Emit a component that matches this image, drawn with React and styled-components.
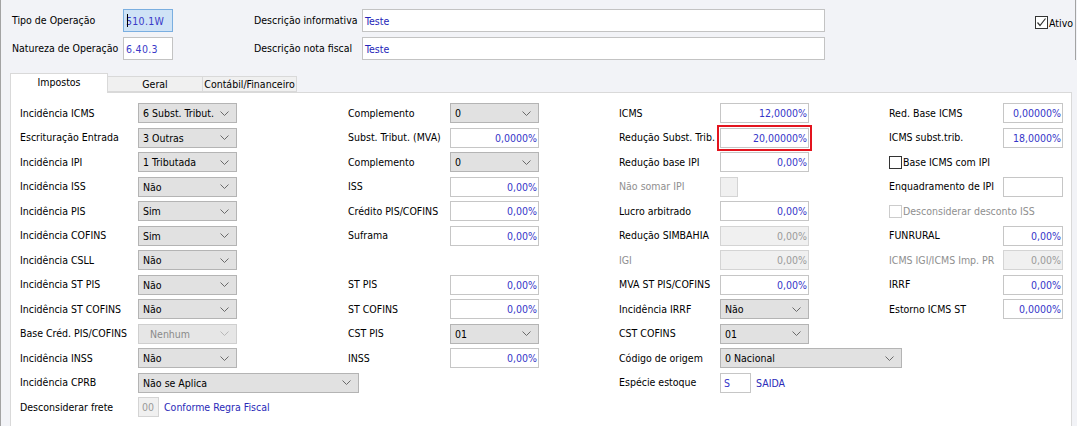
import React from "react";
import styled, { createGlobalStyle } from "styled-components";

const GlobalStyle = createGlobalStyle`
  html, body {
    margin: 0;
    padding: 0;
    overflow: hidden;
    background: #f2f3f7;
  }
  * {
    box-sizing: border-box;
  }
`;

const FONT = `"DejaVu Sans Condensed", "Liberation Sans", sans-serif`;
const VALUE = "#3535c8";

const Window = styled.div`
  width: 1077px;
  height: 426px;
  display: flex;
  flex-direction: column;
  background: #f2f3f7;
  border-left: 1px solid #a3a3a3;
  font-family: ${FONT};
  font-size: 10.5px;
  color: #000;
`;

const Header = styled.div`
  display: flex;
  align-items: flex-start;
  padding: 9px 2px 0 11px;
  margin-right: 1px;
  border-right: 1px solid #a3a3a3;
`;

const HeaderGrid = styled.div`
  display: grid;
  grid-template-columns: 111px 50px 81px 108px 463px;
  grid-auto-rows: 23px;
  row-gap: 5px;
  align-items: center;
  white-space: nowrap;
`;

const HeaderLabel = styled.span`
  margin-top: -2px;
`;

const HeaderInput = styled.div`
  height: 23px;
  display: flex;
  align-items: center;
  padding-left: 2px;
  border: 1px solid ${(p) => (p.$focus ? "#7aaee0" : "#c3c3c3")};
  background: ${(p) => (p.$focus ? "#cfe3f6" : "#fff")};
  color: ${(p) => (p.$mono ? "#3a3ac8" : "#2424b8")};
  letter-spacing: ${(p) => (p.$mono ? "0.3px" : "0")};
  position: relative;
`;

const Caret = styled.span`
  position: absolute;
  left: 3px;
  top: 4px;
  width: 1px;
  height: 13px;
  background: #000;
`;

const HeaderGap = styled.div``;

const Ativo = styled.label`
  margin-left: auto;
  margin-top: 7px;
  display: flex;
  align-items: center;
  gap: 1px;
`;

const Box = styled.span`
  width: 13px;
  height: 13px;
  display: inline-flex;
  align-items: center;
  justify-content: center;
  border: 1px solid ${(p) => (p.$disabled ? "#cccccc" : "#333")};
  background: #fff;
  flex-shrink: 0;
`;

const TabBar = styled.div`
  display: flex;
  align-items: flex-end;
  margin: 13px 0 0 9px;
  height: 19px;
  position: relative;
  z-index: 1;
`;

const Tab = styled.div`
  height: ${(p) => (p.$active ? "20px" : "16px")};
  width: ${(p) => p.$w}px;
  margin-bottom: ${(p) => (p.$active ? "-1px" : "0")};
  display: flex;
  align-items: center;
  justify-content: center;
  padding-bottom: ${(p) => (p.$active ? "3px" : "0")};
  background: ${(p) => (p.$active ? "#fff" : "#f0f0f0")};
  border: 1px solid #d9d9d9;
  border-bottom: ${(p) => (p.$active ? "none" : "1px solid #d9d9d9")};
  border-left: ${(p) => (p.$first ? "1px solid #d9d9d9" : "none")};
`;

const Panel = styled.div`
  flex: 1;
  margin: 0 5px 0 9px;
  background: #fff;
  border: 1px solid #d9d9d9;
  border-bottom: none;
  padding: 8px 0 0 9px;
`;

const FormGrid = styled.div`
  display: grid;
  grid-template-columns: 118px 210px 102px 169px 101px 169px 114px 1fr;
  grid-auto-rows: 24.5px;
  align-items: center;
`;

const Cell = styled.div`
  grid-row: ${(p) => p.$row};
  grid-column: ${(p) => p.$col} / span ${(p) => p.$span || 1};
  display: flex;
  align-items: center;
  gap: 5px;
  white-space: nowrap;
`;

const Label = styled.span`
  color: ${(p) => (p.$muted ? "#8f8f8f" : "#000")};
  margin-top: -1px;
  margin-left: ${(p) => (p.$tight ? "-4px" : "0")};
`;

const Input = styled.div`
  width: ${(p) => p.$w}px;
  height: 20px;
  display: flex;
  align-items: center;
  justify-content: ${(p) => (p.$left ? "flex-start" : "flex-end")};
  padding: ${(p) => (p.$left ? "0 0 0 3px" : "0 1px 0 0")};
  border: 1px solid ${(p) => (p.$disabled ? "#d4d4d4" : "#c6c6c6")};
  background: ${(p) => (p.$disabled ? "#f0f0f0" : "#fff")};
  color: ${(p) => (p.$disabled ? "#9a9a9a" : VALUE)};
  outline: ${(p) => (p.$highlight ? "2px solid #e3141e" : "none")};
  outline-offset: 1px;
`;

const Select = styled.div`
  width: ${(p) => p.$w}px;
  height: 20px;
  display: flex;
  align-items: center;
  justify-content: space-between;
  padding: 0 7px 0 ${(p) => (p.$disabled ? "11px" : "4px")};
  border: 1px solid ${(p) => (p.$disabled ? "#cfcfcf" : "#b4b4b4")};
  background: ${(p) => (p.$disabled ? "#e6e6e6" : "#e1e1e1")};
  color: ${(p) => (p.$disabled ? "#8a8a8a" : "#000")};
`;

const Link = styled.span`
  color: #2a2ab8;
`;

const Chevron = ({ disabled }) => (
  <svg width="9" height="5" viewBox="0 0 9 5">
    <polyline
      points="0.5,0.5 4.5,4.5 8.5,0.5"
      fill="none"
      stroke={disabled ? "#b8b8b8" : "#6a6a6a"}
      strokeWidth="1"
    />
  </svg>
);

const Check = () => (
  <svg width="11" height="11" viewBox="0 0 11 11">
    <polyline points="1.5,5.5 4,8.5 9.5,1.5" fill="none" stroke="#333" strokeWidth="1.2" />
  </svg>
);

const Field = ({ f }) => {
  if (f.t === "select")
    return (
      <Select $w={f.w || 99} $disabled={f.disabled}>
        <span>{f.v}</span>
        <Chevron disabled={f.disabled} />
      </Select>
    );
  if (f.t === "check")
    return (
      <>
        <Box $disabled={f.disabled} />
        <Label $muted={f.disabled} $tight>
          {f.v}
        </Label>
      </>
    );
  return (
    <>
      <Input
        $w={f.w || 89}
        $disabled={f.disabled}
        $left={f.left}
        $highlight={f.highlight}
      >
        {f.v}
      </Input>
      {f.link && <Link>{f.link}</Link>}
    </>
  );
};

const sel = (v, extra) => ({ t: "select", v, ...extra });
const inp = (v, extra) => ({ t: "input", v, ...extra });

// [row, label, field, mutedLabel]
const columns = [
  {
    col: 1,
    rows: [
      [1, "Incidência ICMS", sel("6 Subst. Tribut.")],
      [2, "Escrituração Entrada", sel("3 Outras")],
      [3, "Incidência IPI", sel("1 Tributada")],
      [4, "Incidência ISS", sel("Não")],
      [5, "Incidência PIS", sel("Sim")],
      [6, "Incidência COFINS", sel("Sim")],
      [7, "Incidência CSLL", sel("Não")],
      [8, "Incidência ST PIS", sel("Não")],
      [9, "Incidência ST COFINS", sel("Não")],
      [10, "Base Créd. PIS/COFINS", sel("Nenhum", { disabled: true })],
      [11, "Incidência INSS", sel("Não")],
      [12, "Incidência CPRB", sel("Não se Aplica", { w: 221, span: 3 })],
      [13, "Desconsiderar frete", inp("00", { w: 21, left: true, disabled: true, link: "Conforme Regra Fiscal", span: 3 })],
    ],
  },
  {
    col: 3,
    rows: [
      [1, "Complemento", sel("0", { w: 89 })],
      [2, "Subst. Tribut. (MVA)", inp("0,0000%")],
      [3, "Complemento", sel("0", { w: 89 })],
      [4, "ISS", inp("0,00%")],
      [5, "Crédito PIS/COFINS", inp("0,00%")],
      [6, "Suframa", inp("0,00%")],
      [8, "ST PIS", inp("0,00%")],
      [9, "ST COFINS", inp("0,00%")],
      [10, "CST PIS", sel("01", { w: 89 })],
      [11, "INSS", inp("0,00%")],
    ],
  },
  {
    col: 5,
    rows: [
      [1, "ICMS", inp("12,0000%")],
      [2, "Redução Subst. Trib.", inp("20,00000%", { highlight: true })],
      [3, "Redução base IPI", inp("0,00%")],
      [4, "Não somar IPI", inp("", { w: 18, disabled: true }), true],
      [5, "Lucro arbitrado", inp("0,00%")],
      [6, "Redução SIMBAHIA", inp("0,00%", { disabled: true })],
      [7, "IGI", inp("0,00%", { disabled: true }), true],
      [8, "MVA ST PIS/COFINS", inp("0,00%")],
      [9, "Incidência IRRF", sel("Não", { w: 89 })],
      [10, "CST COFINS", sel("01", { w: 89 })],
      [11, "Código de origem", sel("0 Nacional", { w: 182, span: 3 })],
      [12, "Espécie estoque", inp("S", { w: 31, left: true, link: "SAIDA", span: 3 })],
    ],
  },
  {
    col: 7,
    rows: [
      [1, "Red. Base ICMS", inp("0,00000%", { w: 60 })],
      [2, "ICMS subst.trib.", inp("18,0000%", { w: 60 })],
      [3, null, { t: "check", v: "Base ICMS com IPI" }],
      [4, "Enquadramento de IPI", inp("", { w: 60 })],
      [5, null, { t: "check", v: "Desconsiderar desconto ISS", disabled: true }],
      [6, "FUNRURAL", inp("0,00%", { w: 60 })],
      [7, "ICMS IGI/ICMS Imp. PR", inp("0,00%", { w: 60, disabled: true }), true],
      [8, "IRRF", inp("0,00%", { w: 60 })],
      [9, "Estorno ICMS ST", inp("0,0000%", { w: 60 })],
    ],
  },
];

export default function App() {
  return (
    <>
      <GlobalStyle />
      <Window>
        <Header>
          <HeaderGrid>
            <HeaderLabel>Tipo de Operação</HeaderLabel>
            <HeaderInput $focus $mono>
              <Caret />
              510.1W
            </HeaderInput>
            <HeaderGap />
            <HeaderLabel>Descrição informativa</HeaderLabel>
            <HeaderInput>Teste</HeaderInput>
            <HeaderLabel>Natureza de Operação</HeaderLabel>
            <HeaderInput $mono>6.40.3</HeaderInput>
            <HeaderGap />
            <HeaderLabel>Descrição nota fiscal</HeaderLabel>
            <HeaderInput>Teste</HeaderInput>
          </HeaderGrid>
          <Ativo>
            <Box>
              <Check />
            </Box>
            Ativo
          </Ativo>
        </Header>
        <TabBar>
          <Tab $active $first $w={98}>
            Impostos
          </Tab>
          <Tab $w={95}>Geral</Tab>
          <Tab $w={94}>Contábil/Financeiro</Tab>
        </TabBar>
        <Panel>
          <FormGrid>
            {columns.map(({ col, rows }) =>
              rows.map(([row, label, field, muted]) =>
                label ? (
                  <React.Fragment key={`${col}-${row}`}>
                    <Cell $row={row} $col={col}>
                      <Label $muted={muted}>{label}</Label>
                    </Cell>
                    <Cell $row={row} $col={col + 1} $span={field.span}>
                      <Field f={field} />
                    </Cell>
                  </React.Fragment>
                ) : (
                  <Cell key={`${col}-${row}`} $row={row} $col={col} $span={2}>
                    <Field f={field} />
                  </Cell>
                )
              )
            )}
          </FormGrid>
        </Panel>
      </Window>
    </>
  );
}
